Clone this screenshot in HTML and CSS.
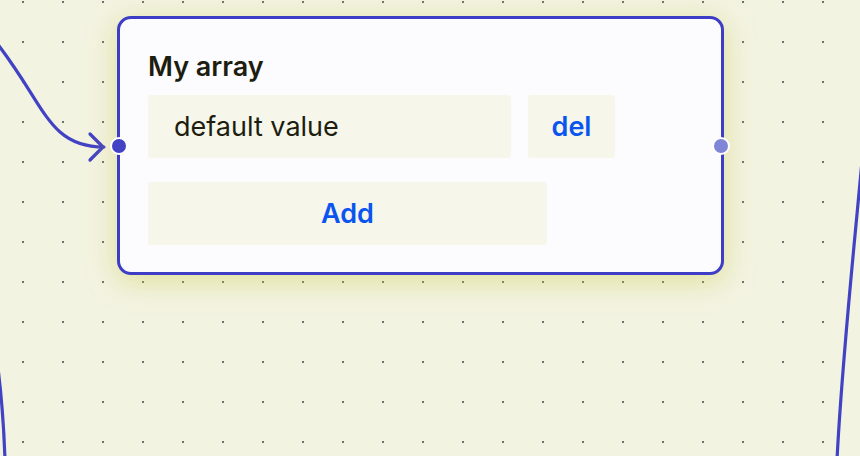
FILE: index.html
```html
<!DOCTYPE html>
<html>
<head>
<meta charset="utf-8">
<link rel="stylesheet" href="styles.css">
</head>
<body>
<div class="canvas">
  <svg class="edges" width="860" height="456" viewBox="0 0 860 456">
    <path d="M -12 32 C 45 100, 45 147, 104 147" />
    <path d="M 90 134 L 103 147 L 90 160" />
    <path d="M -2 368 C 2 400, 4 430, 5 460" />
    <path d="M 863 150 C 853 260, 842 360, 837 460" />
  </svg>
  <div class="node">
    <div class="node-title">My array</div>
    <div class="row">
      <div class="field">default value</div>
      <button class="btn btn-del">del</button>
    </div>
    <button class="btn btn-add">Add</button>
    <span class="handle handle-in"></span>
    <span class="handle handle-out"></span>
  </div>
</div>
</body>
</html>
```

FILE: styles.css
```css
html, body {
  margin: 0;
  padding: 0;
}
body {
  font-family: Inter, "Noto Sans", sans-serif;
  background: #f3f3e1;
}
.canvas {
  position: relative;
  width: 860px;
  height: 456px;
  overflow: hidden;
  background-color: #f3f3e2;
  background-image: radial-gradient(circle, #707070 0.9px, transparent 1.2px);
  background-size: 40px 40px;
  background-position: 3px -18px;
}
.edges {
  position: absolute;
  left: 0;
  top: 0;
}
.edges path {
  fill: none;
  stroke: #4242c4;
  stroke-width: 3.2;
  stroke-linecap: round;
  stroke-linejoin: round;
}
.node {
  position: absolute;
  left: 117px;
  top: 16px;
  width: 601px;
  height: 253px;
  box-sizing: content-box;
  border: 3px solid #3d3dc6;
  border-radius: 14px;
  background: #fcfcff;
  box-shadow: 0 6px 28px rgba(205, 205, 80, 0.5);
}
.node-title {
  margin: 32px 0 0 28px;
  font-size: 27px;
  line-height: 32px;
  font-weight: 600;
  color: #1d1d10;
}
.row {
  display: flex;
  gap: 17px;
  margin: 12px 0 0 28px;
}
.field {
  width: 337px;
  height: 63px;
  padding-left: 26px;
  background: #f6f6ea;
  border-radius: 3px;
  display: flex;
  align-items: center;
  font-size: 27px;
  color: #1d1d10;
}
.btn {
  border: none;
  background: #f6f6ea;
  border-radius: 3px;
  font-family: Inter, "Noto Sans", sans-serif;
  font-size: 27px;
  font-weight: 600;
  color: #0a55f0;
  height: 63px;
  padding: 0;
}
.btn-del {
  width: 87px;
}
.btn-add {
  display: block;
  width: 399px;
  margin: 24px 0 0 28px;
}
.handle {
  position: absolute;
  top: 118px;
  width: 14px;
  height: 14px;
  border: 2px solid #ffffff;
  border-radius: 50%;
}
.handle-in {
  left: -10px;
  background: #4242c4;
}
.handle-out {
  right: -9px;
  background: #7f86d8;
}
```
